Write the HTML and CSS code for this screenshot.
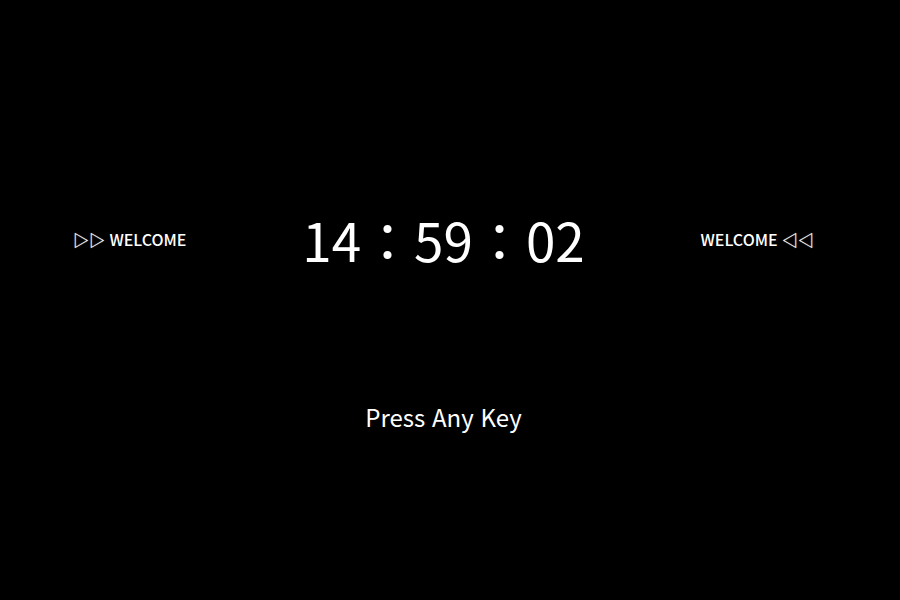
FILE: index.html
```html
<!DOCTYPE html>
<html lang="ko">
<head>
<meta charset="utf-8">
<title>Welcome</title>
<link rel="stylesheet" href="styles.css">
</head>
<body>
<main class="screen">
  <div class="row">
    <p class="welcome"><span class="arrows">▷▷</span> WELCOME</p>
    <h1 class="clock">14：59：02</h1>
    <p class="welcome">WELCOME <span class="arrows">◁◁</span></p>
  </div>
  <p class="prompt">Press Any Key</p>
</main>
</body>
</html>
```
FILE: styles.css
```css
* { box-sizing: border-box; margin: 0; }
body {
  background: #000;
  color: #fff;
  font-family: "Noto Sans CJK KR", sans-serif;
}
.screen {
  min-height: 100vh;
  padding: 195px 28px 0 15px;
}
.row {
  display: flex;
  align-items: center;
  justify-content: space-around;
}
.welcome { font-size: 16px; line-height: 24px; font-weight: 500; white-space: nowrap; }
.arrows { text-shadow: 0 0 1px #fff; }
.clock { font-size: 53px; line-height: 88px; font-weight: 400; white-space: nowrap; }
.prompt { margin-top: 116px; font-size: 24px; line-height: 36px; font-weight: 400; text-align: center; }
```
